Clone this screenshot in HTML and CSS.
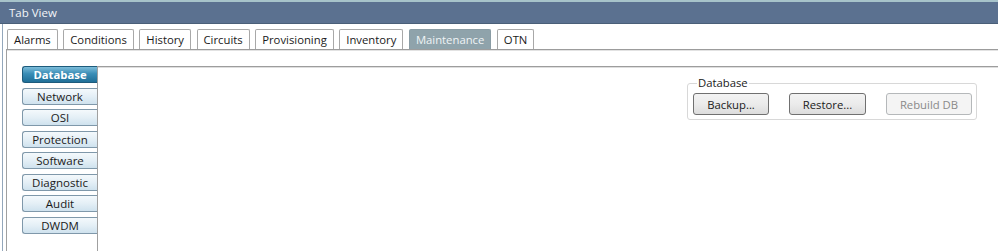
FILE: index.html
```html
<!DOCTYPE html>
<html lang="en">
<head>
    <meta charset="UTF-8">
    <title>Tab View</title>
    <link rel="stylesheet" href="styles.css">
</head>
<body>
    <div class="titlebar">Tab View</div>
    <div class="frame">
        <div class="tabs">
            <div class="tab">Alarms</div>
            <div class="tab">Conditions</div>
            <div class="tab">History</div>
            <div class="tab">Circuits</div>
            <div class="tab">Provisioning</div>
            <div class="tab">Inventory</div>
            <div class="tab active">Maintenance</div>
            <div class="tab">OTN</div>
        </div>
        <div class="panel">
            <div class="sidetabs">
                <div class="sidetab selected">Database</div>
                <div class="sidetab">Network</div>
                <div class="sidetab">OSI</div>
                <div class="sidetab">Protection</div>
                <div class="sidetab">Software</div>
                <div class="sidetab">Diagnostic</div>
                <div class="sidetab">Audit</div>
                <div class="sidetab">DWDM</div>
            </div>
            <div class="content">
                <fieldset class="group">
                    <legend>Database</legend>
                    <button class="btn btn-backup">Backup...</button>
                    <button class="btn btn-restore">Restore...</button>
                    <button class="btn btn-rebuild" disabled>Rebuild DB</button>
                </fieldset>
            </div>
        </div>
    </div>
</body>
</html>
```

FILE: styles.css
```css
body {
    margin: 0;
    background: #fff;
    font-family: "Open Sans", "Noto Sans", sans-serif;
    font-size: 11px;
    color: #1a1a1a;
    height: 251px;
    overflow: hidden;
}

.titlebar {
    height: 21px;
    border-top: 2px solid #a7c3ca;
    border-bottom: 1px solid #4a5f78;
    background: #5b7190;
    color: #f2f5f8;
    padding-left: 9px;
    line-height: 21px;
    font-size: 11.5px;
}

.frame {
    height: 227px;
    margin-left: 2px;
    border-left: 1px solid #93a7bb;
    display: flex;
    flex-direction: column;
}

.tabs {
    display: flex;
    gap: 5.5px;
    padding-left: 4px;
    margin-top: 5px;
    height: 20px;
}

.tab {
    height: 19px;
    line-height: 20px;
    padding: 0 6px;
    border: 1px solid #a8a8a8;
    border-bottom: none;
    border-radius: 2px 2px 0 0;
    background: #fff;
    font-size: 11.3px;
}

.tab.active {
    background: #8fa3ab;
    border-color: #8a9ca4;
    color: #f0f4f6;
}

.panel {
    flex: 1;
    margin-left: 3px;
    border-top: 1px solid #9c9c9c;
    border-left: 1px solid #a0a0a0;
    box-shadow: inset 0 1px 0 #e2e2e2;
    display: flex;
}

.sidetabs {
    width: 75px;
    padding: 16px 0 0 15px;
    display: flex;
    flex-direction: column;
    gap: 4.5px;
}

.sidetab {
    height: 15px;
    line-height: 15px;
    border: 1px solid #7f98aa;
    border-right: none;
    border-radius: 3px 0 0 3px;
    background: linear-gradient(#f4f9fc, #e4eff6 50%, #cfe2ee);
    text-align: center;
    color: #1a1a1a;
    font-size: 11.5px;
}

.sidetab.selected {
    background: linear-gradient(#7cbcd9, #3a8db6 45%, #1f6f98);
    border-color: #1d5b7c;
    color: #fff;
    font-weight: bold;
    font-size: 11.3px;
}

.content {
    flex: 1;
    margin-top: 16px;
    border-top: 1px solid #9d9d9d;
    border-left: 1px solid #a0a0a0;
    box-shadow: inset 0 1px 0 #dedede;
    display: flex;
    justify-content: flex-end;
    align-items: flex-start;
    padding: 9px 21px 0 0;
}

.group {
    margin: 0;
    width: 279px;
    padding: 3px 4px 4px 5px;
    border: 1px solid #d8d8d8;
    border-radius: 3px;
    display: flex;
    gap: 20px;
}

.group legend {
    padding: 0 1px;
    margin-left: 4px;
    line-height: 14px;
    font-size: 11.3px;
}

.btn {
    height: 22px;
    padding: 0;
    border: 1px solid #707070;
    border-radius: 3px;
    background: linear-gradient(#f3f3f3, #ebebeb 50%, #dcdcdc);
    font-family: "Open Sans", "Noto Sans", sans-serif;
    font-size: 11.3px;
    color: #1a1a1a;
}

.btn-backup {
    width: 76px;
}

.btn-restore {
    width: 77px;
}

.btn-rebuild {
    width: 86px;
    background: #f4f4f4;
    border-color: #b5b8ba;
    color: #8a8a8a;
}
```
